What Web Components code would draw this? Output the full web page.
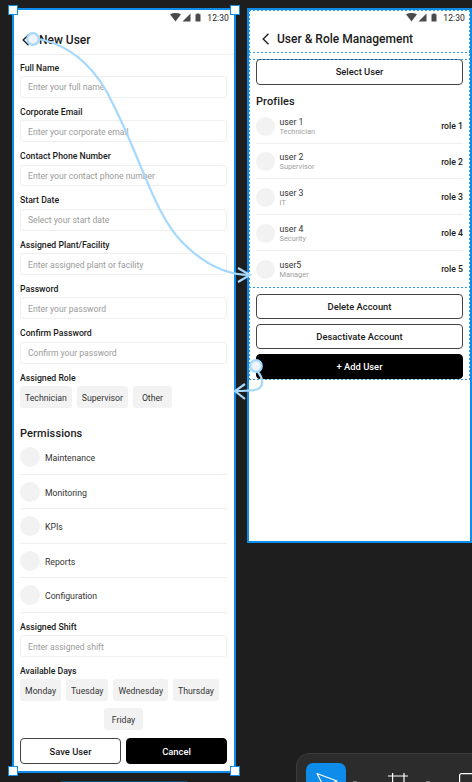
<!DOCTYPE html>
<html>
<head>
<meta charset="utf-8">
<title>User screens</title>
<style>
  html, body { margin: 0; height: 100%; background: #1e1e1e; overflow: hidden; }
  body { font-family: Roboto, "Liberation Sans", sans-serif; }
</style>
</head>
<body>
<x-canvas>
  <x-frame style="left:12px;top:8px;width:224px;height:765px" handles>
    <x-status></x-status>
    <x-appbar inset="8" offset="9" divider>New User</x-appbar>
    <x-form-screen>
      <x-field label="Full Name" placeholder="Enter your full name"></x-field>
      <x-field label="Corporate Email" placeholder="Enter your corporate email"></x-field>
      <x-field label="Contact Phone Number" placeholder="Enter your contact phone number"></x-field>
      <x-field label="Start Date" placeholder="Select your start date"></x-field>
      <x-field label="Assigned Plant/Facility" placeholder="Enter assigned plant or facility"></x-field>
      <x-field label="Password" placeholder="Enter your password"></x-field>
      <x-field label="Confirm Password" placeholder="Confirm your password"></x-field>
      <x-label>Assigned Role</x-label>
      <x-chips style="margin-top:.8px">
        <x-chip>Technician</x-chip><x-chip>Supervisor</x-chip><x-chip wide>Other</x-chip>
      </x-chips>
      <x-section>Permissions</x-section>
      <x-row first>Maintenance</x-row>
      <x-row>Monitoring</x-row>
      <x-row>KPIs</x-row>
      <x-row>Reports</x-row>
      <x-row>Configuration</x-row>
      <x-field label="Assigned Shift" placeholder="Enter assigned shift" style="margin-top:9px"></x-field>
      <x-label>Available Days</x-label>
      <x-chips center>
        <x-chip>Monday</x-chip><x-chip>Tuesday</x-chip><x-chip>Wednesday</x-chip><x-chip style="margin-right:8px">Thursday</x-chip><x-chip wide>Friday</x-chip>
      </x-chips>
      <x-actions>
        <x-btn>Save User</x-btn><x-btn dark>Cancel</x-btn>
      </x-actions>
    </x-form-screen>
  </x-frame>

  <x-frame style="left:247px;top:8px;width:225px;height:535px" dotted>
    <x-status></x-status>
    <x-appbar inset="13" offset="7" compact>User &amp; Role Management</x-appbar>
    <x-role-screen>
      <x-btn style="padding-bottom:1px">Select User</x-btn>
      <x-section compact>Profiles</x-section>
      <x-profile first name="user 1" sub="Technician" role="role 1"></x-profile>
      <x-profile name="user 2" sub="Supervisor" role="role 2"></x-profile>
      <x-profile name="user 3" sub="IT" role="role 3"></x-profile>
      <x-profile name="user 4" sub="Security" role="role 4"></x-profile>
      <x-profile name="user5" sub="Manager" role="role 5" last></x-profile>
      <x-stack>
        <x-btn>Delete Account</x-btn>
        <x-btn>Desactivate Account</x-btn>
        <x-btn dark>+ Add User</x-btn>
      </x-stack>
    </x-role-screen>
    <x-guide style="top:42px"></x-guide>
    <x-guide style="top:49px"></x-guide>
    <x-guide style="top:277px"></x-guide>
    <x-guide style="top:369px"></x-guide>
  </x-frame>

  <x-links></x-links>
  <x-toolbar></x-toolbar>
  <x-peek></x-peek>
</x-canvas>

<script>
class Canvas extends HTMLElement {
  constructor() {
    super();
    this.attachShadow({ mode: "open" }).innerHTML = `
      <style>
        :host { display: block; position: relative; width: 472px; height: 782px; overflow: hidden; background: #1e1e1e; }
      </style>
      <slot></slot>
    `;
  }
}

class Frame extends HTMLElement {
  constructor() {
    super();
    this.attachShadow({ mode: "open" }).innerHTML = `
      <style>
        :host {
          display: flex;
          flex-direction: column;
          position: absolute;
          box-sizing: border-box;
          background: #fff;
          border: 2px solid #0d8ce9;
          color: #1a1a1a;
        }
        :host([dotted])::after {
          content: "";
          position: absolute;
          left: 0;
          right: 0;
          top: 0;
          height: 370px;
          pointer-events: none;
          background:
            repeating-linear-gradient(90deg, #2a9bf0 0 2px, transparent 2px 4px) top / 100% 1px no-repeat,
            repeating-linear-gradient(180deg, #2a9bf0 0 2px, transparent 2px 4px) left / 1px 100% no-repeat,
            repeating-linear-gradient(180deg, #2a9bf0 0 2px, transparent 2px 4px) right / 1px 100% no-repeat;
        }
        i {
          display: none;
          position: absolute;
          box-sizing: border-box;
          width: 10px;
          height: 10px;
          background: #fff;
          border: 1.5px solid #0d8ce9;
        }
        :host([handles]) i { display: block; }
        .tl { left: -6px; top: -5px; }
        .tr { right: -6px; top: -5px; }
        .bl { left: -6px; bottom: -5px; }
        .br { right: -6px; bottom: -5px; }
      </style>
      <slot></slot>
      <i class="tl"></i><i class="tr"></i><i class="bl"></i><i class="br"></i>
    `;
  }
}

class StatusBar extends HTMLElement {
  constructor() {
    super();
    this.attachShadow({ mode: "open" }).innerHTML = `
      <style>
        :host {
          display: flex;
          justify-content: flex-end;
          align-items: center;
          height: 15px;
          padding-right: 5px;
          font-size: 8.5px;
          color: #1a1a1a;
          letter-spacing: .1px;
        }
        svg { display: block; fill: #4a4a4a; }
        span { margin-left: 5px; }
      </style>
      <svg width="32" height="9" viewBox="0 0 32 9">
        <path d="M0 1.2C3.2-.4 7.8-.4 11 1.2L5.5 8.5z"/>
        <path d="M20.5 .5V8.5H12.5z"/>
        <path d="M25.5 1.2h1.2V.4h2.6v.8h1.2V8.5h-5z"/>
      </svg>
      <span>12:30</span>
    `;
  }
}

class AppBar extends HTMLElement {
  constructor() {
    super();
    const inset = this.getAttribute("inset") || 8;
    const offset = this.getAttribute("offset") || 8;
    this.attachShadow({ mode: "open" }).innerHTML = `
      <style>
        :host {
          display: flex;
          align-items: center;
          box-sizing: border-box;
          height: 30px;
          padding-left: ${inset}px;
          font-size: 12px;
          font-weight: 500;
          color: #1a1a1a;
        }
        :host([divider]) { border-bottom: 1px solid #efefef; }
        :host([compact]) { height: 29px; padding-bottom: 2px; }
        svg { display: block; flex: none; fill: none; stroke: #222; stroke-width: 1.4; }
        span { margin-left: ${offset}px; }
      </style>
      <svg width="8" height="12" viewBox="0 0 8 12"><path d="M6.5 .8L1.2 6l5.3 5.2"/></svg>
      <span><slot></slot></span>
    `;
  }
}

class FormScreen extends HTMLElement {
  constructor() {
    super();
    this.attachShadow({ mode: "open" }).innerHTML = `
      <style>
        :host { display: block; padding: 7.5px 7px 0 6px; }
      </style>
      <slot></slot>
    `;
  }
}

class Label extends HTMLElement {
  constructor() {
    super();
    this.attachShadow({ mode: "open" }).innerHTML = `
      <style>
        :host { display: block; height: 11px; line-height: 11px; margin-bottom: 2.5px; font-size: 8.7px; font-weight: 500; color: #1a1a1a; }
      </style>
      <slot></slot>
    `;
  }
}

class Field extends HTMLElement {
  constructor() {
    super();
    this.attachShadow({ mode: "open" }).innerHTML = `
      <style>
        :host { display: block; margin-bottom: 9px; }
        .box {
          display: flex;
          align-items: center;
          box-sizing: border-box;
          height: 21.8px;
          padding: 1px 7px 0;
          border: 1px solid #efefef;
          border-radius: 3px;
          font-size: 8.6px;
          color: #9a9a9a;
        }
      </style>
      <x-label>${this.getAttribute("label")}</x-label>
      <div class="box">${this.getAttribute("placeholder")}</div>
    `;
  }
}

class Chips extends HTMLElement {
  constructor() {
    super();
    this.attachShadow({ mode: "open" }).innerHTML = `
      <style>
        :host { display: flex; flex-wrap: wrap; gap: 7px 5px; }
        :host([center]) { justify-content: center; }
      </style>
      <slot></slot>
    `;
  }
}

class Chip extends HTMLElement {
  constructor() {
    super();
    this.attachShadow({ mode: "open" }).innerHTML = `
      <style>
        :host {
          display: flex;
          align-items: center;
          justify-content: center;
          box-sizing: border-box;
          height: 22px;
          padding: 1px 5px 0;
          border-radius: 3px;
          background: #f2f2f2;
          font-size: 8.7px;
          color: #333;
        }
        :host([wide]) { min-width: 39px; }
      </style>
      <slot></slot>
    `;
  }
}

class Section extends HTMLElement {
  constructor() {
    super();
    this.attachShadow({ mode: "open" }).innerHTML = `
      <style>
        :host { display: block; height: 14px; line-height: 14px; margin: 18.5px 0 6.5px; font-size: 11px; font-weight: 500; color: #1a1a1a; letter-spacing: .1px; }
        :host([compact]) { margin: 10px 0 8px; }
      </style>
      <slot></slot>
    `;
  }
}

class Row extends HTMLElement {
  constructor() {
    super();
    this.attachShadow({ mode: "open" }).innerHTML = `
      <style>
        :host {
          display: flex;
          align-items: center;
          gap: 5px;
          box-sizing: border-box;
          height: 34.4px;
          padding: 7px 0;
          border-bottom: 1px solid #eee;
          font-size: 8.7px;
          color: #333;
        }
        :host([first]) { height: 28px; padding-top: 0; }
        i { flex: none; width: 20px; height: 20px; border-radius: 50%; background: #f2f2f2; }
        slot { display: block; padding-top: 2px; }
      </style>
      <i></i><slot></slot>
    `;
  }
}

class Actions extends HTMLElement {
  constructor() {
    super();
    this.attachShadow({ mode: "open" }).innerHTML = `
      <style>
        :host { display: grid; grid-template-columns: 1fr 1fr; gap: 5px; margin-top: 8px; --btn-h: 26px; }
      </style>
      <slot></slot>
    `;
  }
}

class Btn extends HTMLElement {
  constructor() {
    super();
    this.attachShadow({ mode: "open" }).innerHTML = `
      <style>
        :host {
          display: flex;
          align-items: center;
          justify-content: center;
          box-sizing: border-box;
          height: var(--btn-h, 25px);
          border: 1px solid #444;
          border-radius: 4px;
          background: #fff;
          font-size: 9.4px;
          font-weight: 500;
          color: #1a1a1a;
        }
        :host([dark]) { background: #000; border-color: #000; color: #fff; }
      </style>
      <slot></slot>
    `;
  }
}

class RoleScreen extends HTMLElement {
  constructor() {
    super();
    this.attachShadow({ mode: "open" }).innerHTML = `
      <style>
        :host { display: block; padding: 5px 7px 0; --btn-h: 26px; }
      </style>
      <slot></slot>
    `;
  }
}

class Profile extends HTMLElement {
  constructor() {
    super();
    this.attachShadow({ mode: "open" }).innerHTML = `
      <style>
        :host {
          display: flex;
          align-items: center;
          gap: 4.5px;
          box-sizing: border-box;
          height: 35.7px;
          padding: 9px 0 7.7px;
          border-bottom: 1px solid #eee;
          font-size: 8.7px;
          color: #333;
        }
        :host([first]) { height: 26.7px; padding-top: 0; }
        :host([last]) { border-bottom: none; }
        i { flex: none; width: 19px; height: 19px; border-radius: 50%; background: #f2f2f2; }
        .txt { flex: 1; line-height: 10px; margin-top: 1px; }
        small { display: block; font-size: 7.4px; color: #a0a0a0; }
        b { font-weight: 500; color: #1a1a1a; }
      </style>
      <i></i>
      <div class="txt">${this.getAttribute("name")}<small>${this.getAttribute("sub")}</small></div>
      <b>${this.getAttribute("role")}</b>
    `;
  }
}

class Stack extends HTMLElement {
  constructor() {
    super();
    this.attachShadow({ mode: "open" }).innerHTML = `
      <style>
        :host { display: flex; flex-direction: column; gap: 5px; margin-top: 7.5px; --btn-h: 25px; }
      </style>
      <slot></slot>
    `;
  }
}

class Guide extends HTMLElement {
  constructor() {
    super();
    this.attachShadow({ mode: "open" }).innerHTML = `
      <style>
        :host {
          display: block;
          position: absolute;
          left: 0;
          right: 0;
          height: 1px;
          background: repeating-linear-gradient(90deg, #2a9bf0 0 2px, transparent 2px 4px);
        }
      </style>
    `;
  }
}

class Links extends HTMLElement {
  constructor() {
    super();
    this.attachShadow({ mode: "open" }).innerHTML = `
      <style>
        :host { position: absolute; inset: 0; pointer-events: none; }
        svg { display: block; fill: none; stroke: #a5d8ff; stroke-width: 2.2; }
        circle { fill: #eef4f9; }
      </style>
      <svg width="472" height="782" viewBox="0 0 472 782">
        <path d="M38 39C72 45 98 70 114 106C142 162 155 215 183 243C205 265 226 275 250 275"/>
        <path d="M238 268L250 275L238 282"/>
        <path d="M258 372C263 378 264 386 258 389C252 391 243 391 235 391"/>
        <path d="M245 384L235 391L245 399"/>
        <circle cx="33" cy="39" r="5.8"/>
        <circle cx="256" cy="366" r="5.8"/>
      </svg>
    `;
  }
}

class Toolbar extends HTMLElement {
  constructor() {
    super();
    this.attachShadow({ mode: "open" }).innerHTML = `
      <style>
        :host {
          display: flex;
          align-items: flex-start;
          gap: 41px;
          position: absolute;
          left: 296px;
          top: 753px;
          width: 220px;
          height: 60px;
          box-sizing: border-box;
          padding: 9px;
          background: #2c2c2c;
          border: 1px solid #3c3c3c;
          border-radius: 13px;
        }
        .on { flex: none; width: 40px; height: 40px; border-radius: 7px; background: #0d8ce9; }
        svg { display: block; flex: none; fill: none; stroke: #fff; stroke-width: 1.2; }
        u { position: absolute; top: 27px; width: 4px; height: 1px; background: #777; }
      </style>
      <div class="on">
        <svg width="40" height="40" viewBox="0 0 40 40"><path d="M11 10.5L31 18L24 21L20.5 29z" stroke-linejoin="round"/></svg>
      </div>
      <svg width="22" height="22" viewBox="0 0 22 22" style="margin-top:10px"><path d="M1 3H21M5.6 0V22M17 0V22"/></svg>
      <svg width="22" height="22" viewBox="0 0 22 22" style="margin:10px 0 0 9px"><rect x=".6" y=".6" width="20" height="20" rx="2"/></svg>
      <u style="left:56px"></u><u style="left:129px"></u>
    `;
  }
}

class Peek extends HTMLElement {
  constructor() {
    super();
    this.attachShadow({ mode: "open" }).innerHTML = `
      <style>
        :host { position: absolute; left: 61px; top: 781px; width: 126px; height: 1px; background: #0f4a70; }
      </style>
    `;
  }
}

customElements.define("x-canvas", Canvas);
customElements.define("x-frame", Frame);
customElements.define("x-status", StatusBar);
customElements.define("x-appbar", AppBar);
customElements.define("x-form-screen", FormScreen);
customElements.define("x-label", Label);
customElements.define("x-field", Field);
customElements.define("x-chips", Chips);
customElements.define("x-chip", Chip);
customElements.define("x-section", Section);
customElements.define("x-row", Row);
customElements.define("x-actions", Actions);
customElements.define("x-btn", Btn);
customElements.define("x-role-screen", RoleScreen);
customElements.define("x-profile", Profile);
customElements.define("x-stack", Stack);
customElements.define("x-guide", Guide);
customElements.define("x-links", Links);
customElements.define("x-toolbar", Toolbar);
customElements.define("x-peek", Peek);
</script>
</body>
</html>
